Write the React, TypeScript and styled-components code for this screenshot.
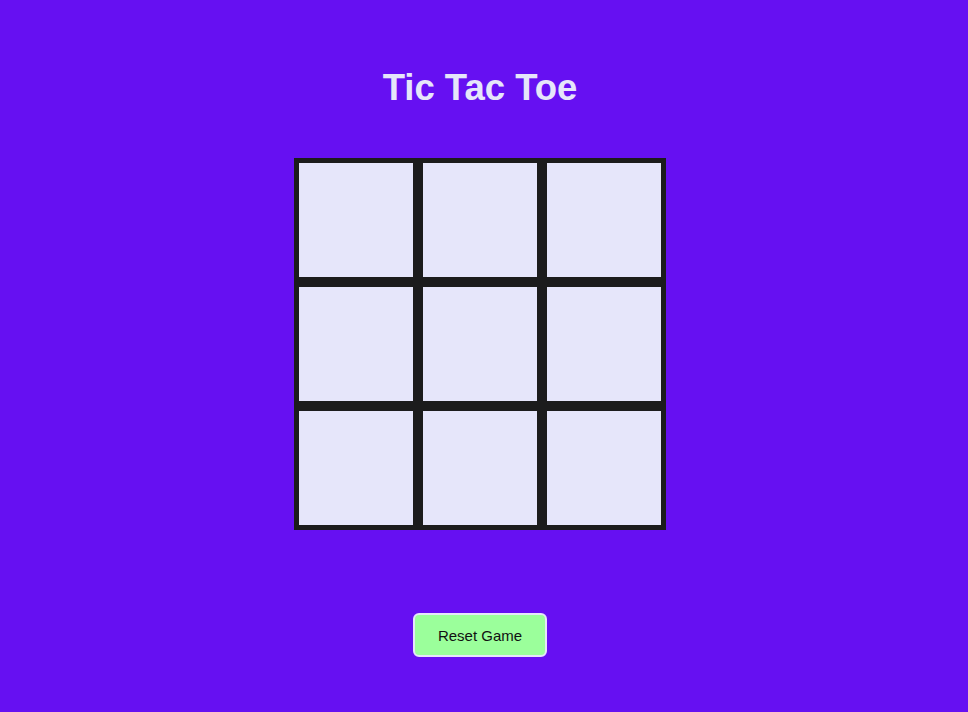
import React, { useState } from 'react';
import styled, { createGlobalStyle } from 'styled-components';

const GlobalStyle = createGlobalStyle`
	html, body {
		margin: 0;
		padding: 0;
		background: #6610f2;
	}
	body {
		font-family: 'Liberation Sans', Arial, sans-serif;
	}
`;

const Page = styled.div`
	width: 960px;
	min-height: 712px;
	display: flex;
	flex-direction: column;
	align-items: center;
`;

const Title = styled.h1`
	margin: 68px 0 0;
	font-size: 36.5px;
	line-height: 40px;
	font-weight: bold;
	color: #e6e6fa;
`;

const Board = styled.div`
	margin-top: 50px;
	display: grid;
	grid-template-columns: repeat(3, 124px);
	grid-template-rows: repeat(3, 124px);
`;

const Box = styled.button`
	box-sizing: border-box;
	width: 124px;
	height: 124px;
	border: 5px solid #1c1c1c;
	background: #e6e6fa;
	padding: 0;
	font-family: 'Liberation Sans', Arial, sans-serif;
	font-size: 60px;
	color: #1c1c1c;
	cursor: pointer;
`;

const ResetButton = styled.button`
	margin-top: 83px;
	width: 134px;
	height: 44px;
	background: #9bff9b;
	border: 2px solid #e6e6fa;
	border-radius: 6px;
	font-family: 'Liberation Sans', Arial, sans-serif;
	font-size: 15px;
	color: #111;
	cursor: pointer;
`;

const App = () => {
	const [cells, setCells] = useState<string[]>(Array(9).fill(''));
	const [turn, setTurn] = useState('X');

	const handleClick = (i: number) => {
		if (cells[i]) return;
		const next = [...cells];
		next[i] = turn;
		setCells(next);
		setTurn(turn === 'X' ? 'O' : 'X');
	};

	const reset = () => {
		setCells(Array(9).fill(''));
		setTurn('X');
	};

	return (
		<Page>
			<GlobalStyle />
			<Title>Tic Tac Toe</Title>
			<Board>
				{cells.map((c, i) => (
					<Box key={i} onClick={() => handleClick(i)}>
						{c}
					</Box>
				))}
			</Board>
			<ResetButton onClick={reset}>Reset Game</ResetButton>
		</Page>
	);
};

export default App;
